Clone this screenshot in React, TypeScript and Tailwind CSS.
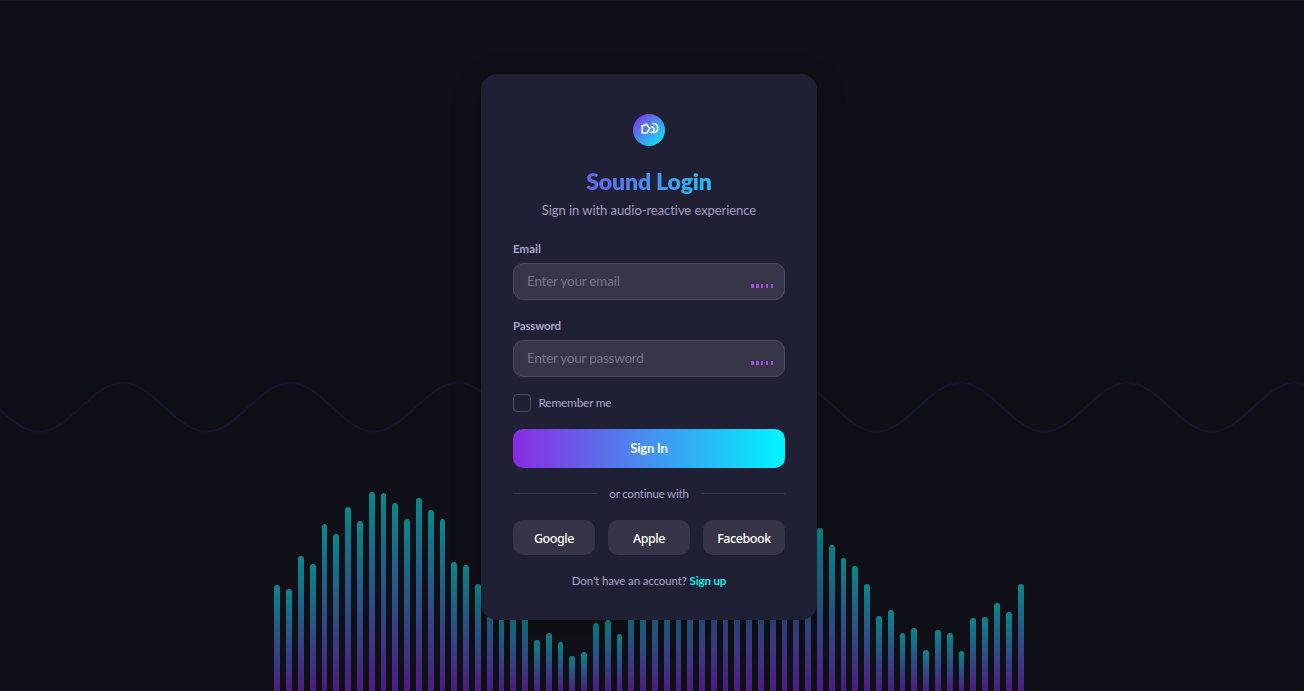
import React from "react";

const barTops = [
  585, 589, 556, 564, 524, 534, 507, 521, 492, 493, 503, 519, 498, 510, 519, 562,
  565, 584, 580, 606, 606, 606, 640, 633, 642, 656, 652, 623, 620, 634, 596, 600,
  590, 584, 578, 572, 560, 530, 525, 535, 530, 525, 520, 515, 510, 535, 528, 545,
  558, 566, 584, 616, 610, 633, 628, 650, 630, 633, 651, 618, 617, 603, 612, 584,
];

const period = 167.5;

function wavePath() {
  let d = "";
  for (let x = 0; x <= 1304; x += 2) {
    const y = 37.2 + 24.4 * Math.cos(((x - 39) / period) * Math.PI * 2);
    d += `${x === 0 ? "M" : "L"}${x} ${y.toFixed(2)}`;
  }
  return d;
}

function Field({ label, placeholder, type }: { label: string; placeholder: string; type: string }) {
  return (
    <label className="block">
      <span className={`block h-[14px] text-[11.5px] leading-[14px] font-bold text-[#aaa5cd] ${type === "email" ? "tracking-[0.05px]" : "tracking-[-0.18px]"}`}>
        {label}
      </span>
      <span className="mt-[7px] flex h-[37px] items-center rounded-[10px] border border-[#4a495a] bg-[#373648] pr-[11px] pl-[13px]">
        <input
          type={type}
          placeholder={placeholder}
          className={`min-w-0 flex-1 bg-transparent text-[13.5px] outline-none placeholder:text-[#777582] ${type === "email" ? "tracking-[-0.22px]" : "tracking-[-0.24px]"}`}
        />
        <span className="mt-[9px] flex h-[4px] gap-[2px]">
          <i className="w-[3px] bg-[#a44be0]" />
          <i className="w-[3px] bg-[#a44be0]" />
          <i className="w-[2px] bg-[#a44be0]" />
          <i className="ml-px w-[2px] bg-[#a44be0]" />
          <i className="ml-px w-[2px] bg-[#a44be0]" />
        </span>
      </span>
    </label>
  );
}

export default function App() {
  return (
    <div className="relative h-[691px] w-full overflow-hidden border-t border-[#1a1a1a] bg-[#0f0f17] font-['Lato',sans-serif]">
      <svg className="absolute top-[369px] left-0" width="1304" height="75" fill="none">
        <path d={wavePath()} stroke="#1b122d" strokeWidth="2" />
      </svg>
      <div className="absolute bottom-0 left-[274.42px] flex items-end gap-[6px]">
        {barTops.map((top, i) => (
          <div
            key={i}
            className="w-[5.8px] shrink-0 rounded-t-[3px] bg-linear-to-t/srgb from-[#4f1b80] to-[#078789] last:w-[6px]"
            style={{ height: 691 - top }}
          />
        ))}
      </div>
      <main className="relative mt-[73px] ml-[481px] flex h-[546px] w-[336px] flex-col rounded-[16px] bg-[#202034] px-8 pt-10 shadow-[0_8px_32px_rgba(0,0,0,0.2)]">
        <div className="relative mx-auto flex size-8 items-center justify-center rounded-full bg-linear-to-br/srgb from-[#8a2be2] to-[#00f5ff]">
          <span className="absolute -inset-[19px] rounded-full border border-[#221f37]" />
          <svg width="20" height="20" viewBox="0 0 20 20" fill="none" stroke="white" strokeWidth="1.6" strokeLinejoin="round" strokeLinecap="round" className="-mt-[2px]">
            <path d="M3.2 6.6h2.1L7.2 5l3.7 4.4L7.6 14H3.2z" />
            <path d="M11 13.3c2.2.8 4-.7 4-2.9 0-1.6-1.2-2.8-2.9-2.7" />
            <path d="M13.8 4.5c3 0 4.9 1.8 4.9 4.3s-1.6 4.6-3.7 4.8" />
          </svg>
        </div>
        <h1 className="mt-[20px] h-[32px] bg-linear-to-r/srgb from-[#8a2be2] to-[#00f5ff] bg-clip-text text-center text-[23px] leading-[31px] font-extrabold tracking-[-0.17px] whitespace-nowrap text-transparent">
          Sound Login
        </h1>
        <p className="mt-[4px] h-[17px] text-center text-[13px] leading-[17px] tracking-[-0.06px] whitespace-nowrap text-[#a09cc2]">
          Sign in with audio-reactive experience
        </p>
        <form className="mt-[23px] flex flex-col" onSubmit={(e) => e.preventDefault()}>
          <Field label="Email" placeholder="Enter your email" type="email" />
          <div className="h-[19px]" />
          <Field label="Password" placeholder="Enter your password" type="password" />
          <label className="mt-[17px] flex h-[18px] items-center gap-[7.5px] text-[12px] leading-[18px] tracking-[-0.28px] text-[#a8a4c8]">
            <input type="checkbox" className="size-[18px] appearance-none rounded-[4px] border border-[#4a495b]" />
            Remember me
          </label>
          <button className="mt-[17px] h-[39px] rounded-[10px] bg-linear-to-r/srgb from-[#8a2be2] to-[#00f5ff] text-[13px] font-bold tracking-[-0.2px] text-white">
            Sign In
          </button>
        </form>
        <div className="mt-[17px] flex h-[18px] items-center gap-3 text-[11.5px] leading-[18px] tracking-[-0.2px] whitespace-nowrap text-[#a8a4c8]">
          <span className="-mt-px h-px flex-1 bg-[#353447]" />
          or continue with
          <span className="-mt-px h-px flex-1 bg-[#353447]" />
        </div>
        <div className="mt-[17px] flex gap-[13px] font-['Noto_Sans',sans-serif] text-[12.5px] font-medium tracking-[-0.42px] text-white">
          <button className="h-[35px] w-[82px] rounded-[10px] bg-[#363548] pt-[3px]">Google</button>
          <button className="h-[35px] w-[82px] rounded-[10px] bg-[#363548] pt-[3px]">Apple</button>
          <button className="h-[35px] w-[82px] rounded-[10px] bg-[#363548] pt-[3px]">Facebook</button>
        </div>
        <p className="mt-[17px] text-center text-[11.5px] leading-[18px] tracking-[-0.13px] whitespace-nowrap text-[#a8a4c8]">
          Don't have an account? <a href="#" className="font-bold text-[#00f0f5]">Sign up</a>
        </p>
      </main>
    </div>
  );
}
